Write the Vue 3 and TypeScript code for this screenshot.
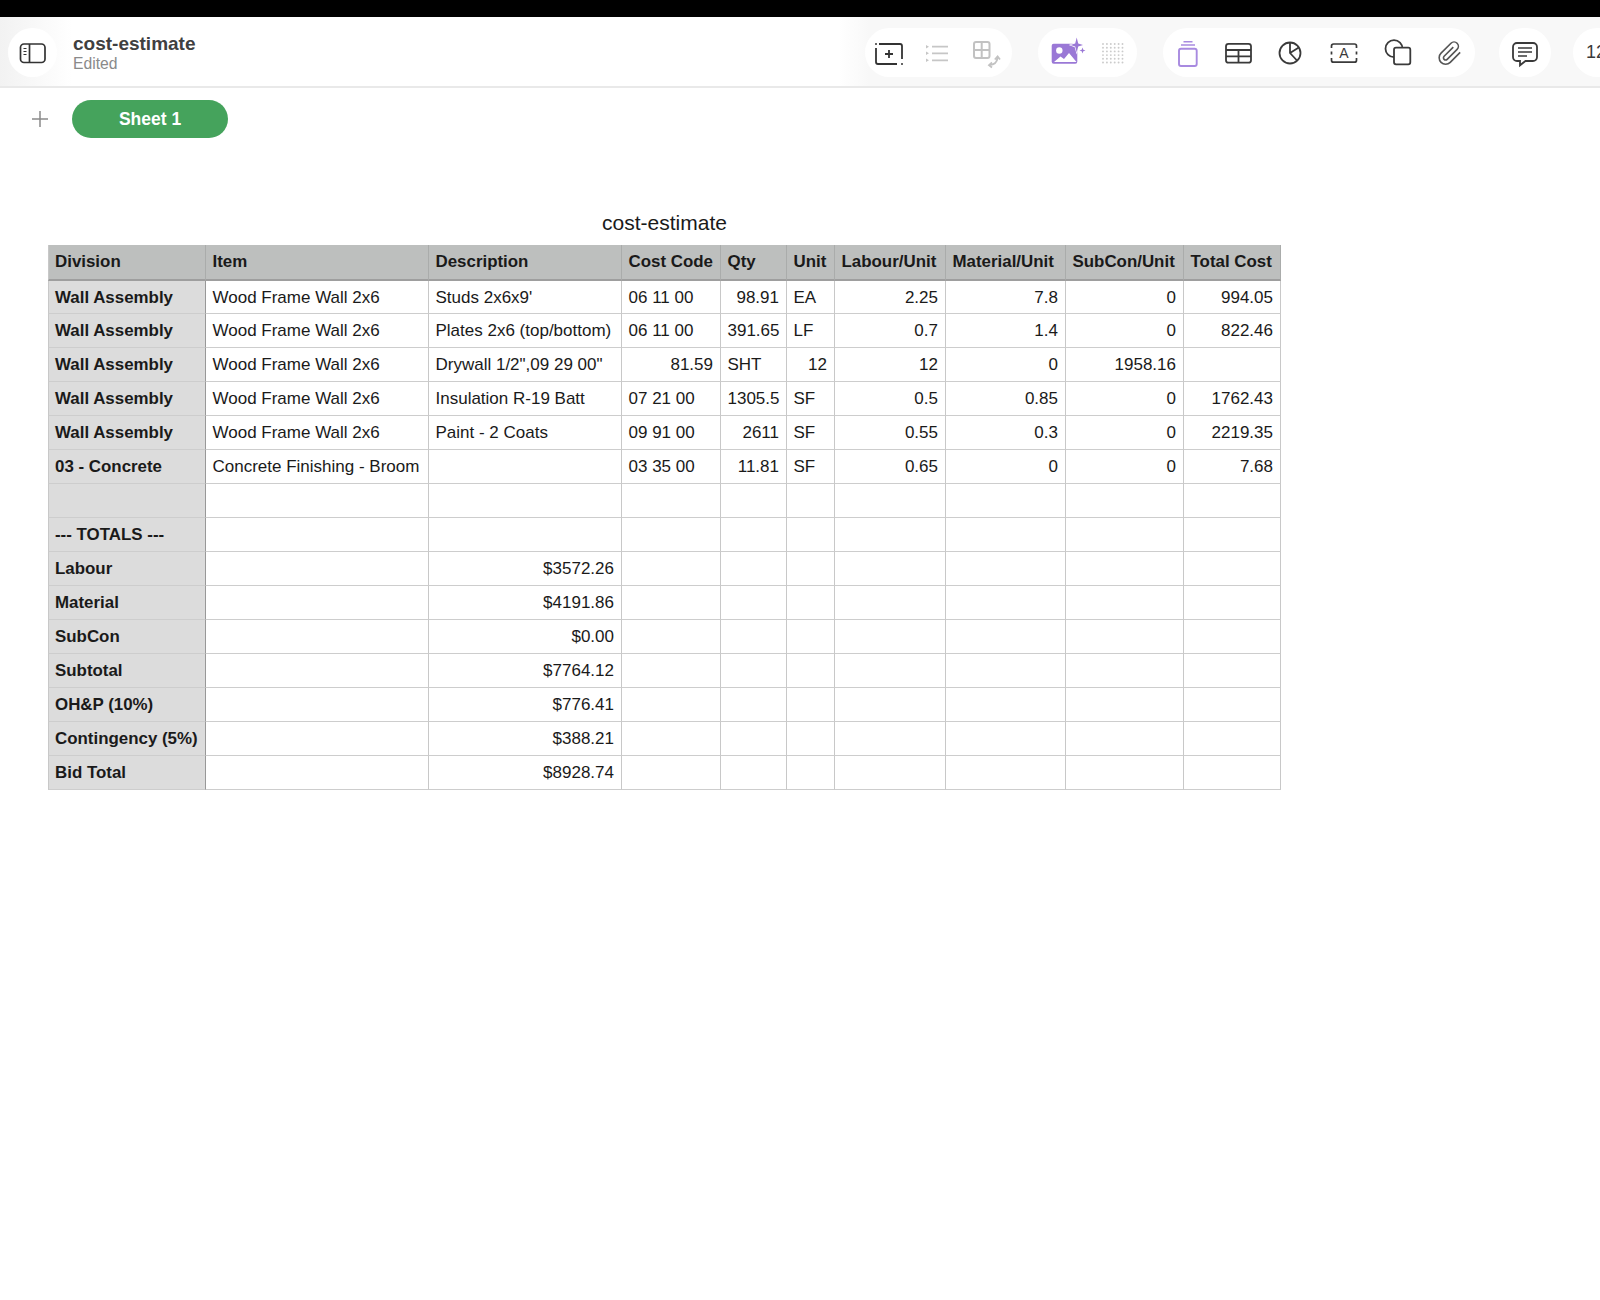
<template>
  <div class="page">
    <div class="status-strip"></div>

    <header class="topbar">
      <button class="round-btn sidebar-btn">
        <svg width="30" height="24" viewBox="0 0 30 24" fill="none" stroke="#333" stroke-width="1.7">
          <rect x="2.500" y="3" width="24.500" height="18.500" rx="3.500" />
          <path d="M11.500 3v18.500" />
          <path d="M5.500 7.500h3M5.500 10.500h3M5.500 13.500h3" stroke-width="1.200" />
        </svg>
      </button>
      <div class="doc-title">
        <div class="doc-name">cost-estimate</div>
        <div class="doc-state">Edited</div>
      </div>

      <div class="tools">
        <div class="pill group-a">
          <svg class="icon" viewBox="0 0 30 30" fill="none" stroke="#333" stroke-width="1.800">
            <path d="M5 6h21a2 2 0 0 1 2 2v13" />
            <path d="M2 10v14a2 2 0 0 0 2 2h19" />
            <path d="M15 12v8M11 16h8" />
            <circle cx="2" cy="6" r="1" fill="#333" stroke="none" />
            <circle cx="28" cy="26" r="1" fill="#333" stroke="none" />
          </svg>
          <svg class="icon" viewBox="0 0 30 30" fill="none" stroke="#c6c6c6" stroke-width="1.800">
            <path d="M10 8.700h16M10 15.300h16M10 22.300h16" />
            <path d="M4 7l3 1.700-3 1.700zM4 13.600l3 1.700-3 1.700zM4 20.600l3 1.700-3 1.700z" fill="#c6c6c6" stroke="none" />
          </svg>
          <svg class="icon" viewBox="0 0 30 30" fill="none" stroke="#c2c2c2" stroke-width="2">
            <rect x="4" y="4" width="15.500" height="16" rx="2" />
            <path d="M11.700 4v16M4 12h15.500" />
            <path d="M27.500 20c-.5 4-3.500 6.700-8 7" />
            <path d="M24.800 21.500l2.800-3 2.400 3M22 24.500l-3 2.600 3 2.400" stroke-width="1.800" />
          </svg>
        </div>

        <div class="pill group-b">
          <svg class="icon" viewBox="0 0 30 30" fill="none">
            <rect x="1.700" y="5.700" width="25.600" height="20" rx="2" fill="#9a78d6" />
            <circle cx="9.300" cy="12.500" r="3.200" fill="#fff" />
            <path d="M4 24l6.500-5.500 3.500 2.500 5-6 7.500 9z" fill="#fff" />
            <path d="M26.700 -2.500l2 7.300 6 2.200-6 2.200-2 7.300-2-7.300-6-2.200 6-2.200z" fill="#fff" />
            <path d="M26.700 -.5l1.500 6 4.800 1.500-4.800 1.500-1.500 6-1.500-6-4.800-1.500 4.800-1.500z" fill="#9a78d6" />
            <path d="M32.500 9.500l.8 2.300 2.200.7-2.200.7-.8 2.300-.8-2.300-2.200-.7 2.200-.7z" fill="#9a78d6" />
          </svg>
          <svg class="icon" viewBox="0 0 30 30" fill="#cbcbcb">
            <circle v-for="d in dots" :key="d.id" :cx="d.x" :cy="d.y" r="0.950" />
          </svg>
        </div>

        <div class="pill group-c">
          <svg class="icon" viewBox="0 0 30 30" fill="none" stroke="#a88ae0" stroke-width="1.900">
            <rect x="6" y="10.700" width="17.700" height="17.300" rx="2" />
            <path d="M8 7h14M10.500 3.700h9" stroke-width="1.500" />
          </svg>
          <svg class="icon" viewBox="0 0 30 30" fill="none" stroke="#3a3a3a" stroke-width="1.800">
            <rect x="2" y="5.800" width="25" height="18.900" rx="2.500" />
            <path d="M2 12h25M2 18.300h25M14.500 12v12.700" />
          </svg>
          <svg class="icon" viewBox="0 0 30 30" fill="none" stroke="#3a3a3a" stroke-width="1.800">
            <circle cx="15" cy="15" r="10.500" />
            <path d="M15 4.800v10.200l7 7.500M15 15l8.800-5.500" />
          </svg>
          <svg class="icon" viewBox="0 0 30 30" fill="none" stroke="#3a3a3a" stroke-width="1.700">
            <path d="M2.500 10V8a2 2 0 0 1 2-2h21a2 2 0 0 1 2 2v2" />
            <path d="M2.500 20v2.200a2 2 0 0 0 2 2h21a2 2 0 0 0 2-2V20" />
            <path d="M2.500 13.500v3M27.500 13.500v3" />
            <text x="15" y="20" class="icon-letter" text-anchor="middle" fill="#3a3a3a" stroke="none">A</text>
          </svg>
          <svg class="icon" viewBox="0 0 30 30" fill="none" stroke="#3a3a3a" stroke-width="1.800">
            <circle cx="12" cy="10.700" r="8.500" />
            <rect x="12" y="9.700" width="16.300" height="16.600" rx="2" fill="#fff" />
          </svg>
          <svg class="icon" viewBox="0 0 30 30" fill="none" stroke="#555" stroke-width="1.500">
            <g transform="translate(2 2.500) scale(1.080)">
              <path d="M21.440 11.050l-9.190 9.190a6 6 0 0 1-8.490-8.490l9.190-9.190a4 4 0 0 1 5.660 5.660l-9.200 9.190a2 2 0 0 1-2.830-2.830l8.490-8.480" />
            </g>
          </svg>
        </div>

        <div class="pill group-d">
          <svg class="icon" viewBox="0 0 30 30" fill="none" stroke="#3a3a3a" stroke-width="1.800">
            <path d="M7 5h16a4 4 0 0 1 4 4v10a4 4 0 0 1-4 4H15.500L10 27.300V23H7a4 4 0 0 1-4-4V9a4 4 0 0 1 4-4z" />
            <path d="M8 10h14M8 14h14M8 18h9" stroke-width="1.300" />
          </svg>
        </div>

        <div class="pill group-e">12</div>
      </div>
    </header>

    <div class="sheet-tabs">
      <svg class="add-sheet" width="16" height="16" viewBox="0 0 16 16" stroke="#8b8b8b" stroke-width="1.500">
        <path d="M8 0v16M0 8h16" />
      </svg>
      <div class="tab-active">Sheet 1</div>
    </div>

    <main class="canvas">
      <h1 class="table-title">cost-estimate</h1>
      <div class="grid-table">
        <template v-for="(row, r) in rows" :key="r">
          <div
            v-for="(cell, c) in row"
            :key="c"
            class="cell"
            :class="{ head: r === 0, lead: r > 0 && c === 0, num: r > 0 && isNumeric(cell) }"
          >{{ cell }}</div>
        </template>
      </div>
    </main>
  </div>
</template>

<script setup lang="ts">
const wall = ['Wall Assembly', 'Wood Frame Wall 2x6']

const rows: string[][] = [
  ['Division', 'Item', 'Description', 'Cost Code', 'Qty', 'Unit', 'Labour/Unit', 'Material/Unit', 'SubCon/Unit', 'Total Cost'],
  [...wall, "Studs 2x6x9'", '06 11 00', '98.91', 'EA', '2.25', '7.8', '0', '994.05'],
  [...wall, 'Plates 2x6 (top/bottom)', '06 11 00', '391.65', 'LF', '0.7', '1.4', '0', '822.46'],
  [...wall, 'Drywall 1/2",09 29 00"', '81.59', 'SHT', '12', '12', '0', '1958.16', ''],
  [...wall, 'Insulation R-19 Batt', '07 21 00', '1305.5', 'SF', '0.5', '0.85', '0', '1762.43'],
  [...wall, 'Paint - 2 Coats', '09 91 00', '2611', 'SF', '0.55', '0.3', '0', '2219.35'],
  ['03 - Concrete', 'Concrete Finishing - Broom', '', '03 35 00', '11.81', 'SF', '0.65', '0', '0', '7.68'],
  totalRow(''),
  totalRow('--- TOTALS ---'),
  totalRow('Labour', '$3572.26'),
  totalRow('Material', '$4191.86'),
  totalRow('SubCon', '$0.00'),
  totalRow('Subtotal', '$7764.12'),
  totalRow('OH&P (10%)', '$776.41'),
  totalRow('Contingency (5%)', '$388.21'),
  totalRow('Bid Total', '$8928.74'),
]

function totalRow(label: string, amount = ''): string[] {
  return [label, '', amount, '', '', '', '', '', '', '']
}

function isNumeric(value: string): boolean {
  return /^\$?[\d.]+$/.test(value)
}

const dots: { id: number; x: number; y: number }[] = []
for (let i = 0; i < 36; i++) {
  dots.push({ id: i, x: 6 + (i % 6) * 3.9, y: 6 + Math.floor(i / 6) * 3.7 })
}
</script>

<style scoped>
.page {
  width: 1600px;
  height: 1300px;
  overflow: hidden;
  background: #fff;
  font-family: "Liberation Sans", Arial, sans-serif;
  color: #1a1a1a;
}

.status-strip {
  height: 17px;
  background: #000;
}

.topbar {
  display: flex;
  align-items: flex-start;
  box-sizing: border-box;
  height: 71px;
  padding: 11px 0 0 8px;
  border-bottom: 2px solid #e9e9e9;
  background:
    linear-gradient(to right, #f2f2f2, #fff 72px),
    #fff;
}

.round-btn {
  display: flex;
  align-items: center;
  justify-content: center;
  width: 49px;
  height: 49px;
  padding: 0;
  border: none;
  border-radius: 50%;
  background: #fff;
}

.doc-title {
  flex: 1;
  margin-left: 16px;
  padding-top: 5px;
}

.doc-name {
  font-size: 19px;
  font-weight: 700;
  line-height: 21px;
  color: #404040;
}

.doc-state {
  font-size: 15.700px;
  line-height: 19px;
  color: #8a8a8a;
}

.tools {
  flex-shrink: 0;
  display: flex;
  gap: 26px;
  margin-right: -33px;
  margin-top: -11px;
  padding: 11px 0 9px 26px;
  background: linear-gradient(to right, #fff, #f8f8f8 30px);
}

.pill {
  display: flex;
  align-items: center;
  height: 49px;
  box-sizing: border-box;
  border-radius: 25px;
  background: #fff;
}

.icon {
  display: block;
  flex-shrink: 0;
  width: 30px;
  height: 30px;
  overflow: visible;
}

.icon-letter {
  font-family: "Liberation Sans", Arial, sans-serif;
  font-size: 14px;
}

.group-a {
  width: 147px;
  padding-left: 9px;
  gap: 18px;
}

.group-b {
  width: 99px;
  padding-left: 12px;
  gap: 17px;
}

.group-c {
  width: 312px;
  margin-right: -2px;
  padding-left: 10px;
  gap: 21px;
}

.group-c .icon:nth-child(4) {
  margin-left: 3px;
}

.group-c .icon:nth-child(5),
.group-c .icon:nth-child(6) {
  margin-left: 2px;
}

.group-d {
  justify-content: center;
  width: 52px;
  margin-right: -4px;
}

.group-e {
  width: 60px;
  padding-left: 13px;
  font-size: 18px;
  color: #3a3a3a;
}

.sheet-tabs {
  display: flex;
  align-items: center;
  gap: 24px;
  padding: 12px 0 0 32px;
}

.add-sheet {
  display: block;
}

.tab-active {
  width: 156px;
  height: 38px;
  border-radius: 19px;
  background: #45a35c;
  color: #fff;
  font-size: 17.500px;
  font-weight: 700;
  line-height: 39px;
  text-align: center;
}

.canvas {
  width: 1233px;
  margin: 71px 0 0 48px;
}

.table-title {
  margin: 0 0 8px;
  font-size: 21px;
  font-weight: 400;
  line-height: 28px;
  text-align: center;
}

.grid-table {
  display: grid;
  grid-template-columns: 157.500px 223px 193px 99px 66px 48px 111px 120px 118px 97px;
  grid-template-rows: 35.500px;
  grid-auto-rows: 33.950px;
  font-size: 17px;
}

.cell {
  box-sizing: border-box;
  padding: 0 6.500px 0 7px;
  border-right: 1px solid #c8c8c8;
  border-bottom: 1px solid #cdcdcd;
  line-height: 34.500px;
  white-space: nowrap;
}

.cell:nth-child(10n + 1) {
  border-left: 1px solid #c8c8c8;
  padding-left: 6px;
}

.head {
  background: #bdbfbe;
  border-right-color: #aaacab;
  border-bottom: 2px solid #9e9e9e;
  font-size: 16.900px;
  font-weight: 700;
}

.lead {
  background: #dcdcdc;
  border-right-color: #989898;
  font-size: 16.900px;
  font-weight: 700;
}

.num {
  text-align: right;
}
</style>
